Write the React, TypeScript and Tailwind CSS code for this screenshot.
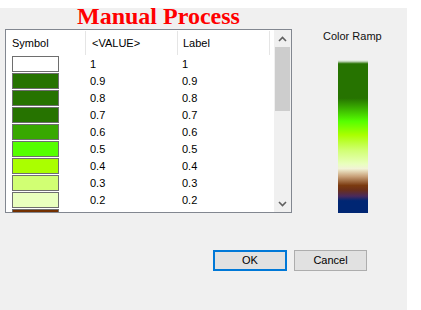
import React from 'react';

type Row = { value: string; color: string };

const rows: Row[] = [
  { value: '1', color: '#ffffff' },
  { value: '0.9', color: '#267300' },
  { value: '0.8', color: '#267300' },
  { value: '0.7', color: '#267300' },
  { value: '0.6', color: '#38a800' },
  { value: '0.5', color: '#55ff00' },
  { value: '0.4', color: '#aaff00' },
  { value: '0.3', color: '#d1ff73' },
  { value: '0.2', color: '#e9ffbe' },
  { value: '', color: '#733000' },
];

const Chevron: React.FC<{ down?: boolean }> = ({ down }) => (
  <svg width="9" height="6" viewBox="0 0 9 6" className={down ? 'rotate-180' : ''}>
    <path d="M1 5 L4.5 1.5 L8 5" fill="none" stroke="#606060" strokeWidth="1.6" />
  </svg>
);

export default function App() {
  return (
    <div className="relative w-[421px] h-[310px] bg-white overflow-hidden font-['Liberation_Sans',Arial,sans-serif] text-[11px] text-black">
      <div className="h-[8px]" />
      <div className="w-[407px] h-[302px] bg-[#f0f0f0] pl-[5px] pt-[21px]">
        <div className="flex">
          {/* table */}
          <div className="w-[287px] h-[184px] border border-[#828790] bg-white flex">
            <div className="w-[268px] flex flex-col">
              <div className="h-[25px] flex shrink-0 pt-[1px]">
                <div className="w-[80px] border-r border-[#e5e5e5] pl-[6px] flex items-center">Symbol</div>
                <div className="w-[92px] border-r border-[#e5e5e5] pl-[6px] flex items-center">&lt;VALUE&gt;</div>
                <div className="w-[92px] border-r border-[#e5e5e5] pl-[5px] flex items-center">Label</div>
              </div>
              <div className="flex-1 overflow-hidden">
                {rows.map((r, i) => (
                  <div key={i} className="h-[17px] flex items-start">
                    <div className="w-[84px] pl-[6px] pt-[1px]">
                      <div className="w-[47px] h-[16px] border border-[#6e6e6e]" style={{ backgroundColor: r.color }} />
                    </div>
                    <div className="w-[92px] leading-[17px] pt-[1px]">{r.value}</div>
                    <div className="leading-[17px] pt-[1px]">{r.value}</div>
                  </div>
                ))}
              </div>
            </div>
            <div className="w-[17px] bg-[#f0f0f0] flex flex-col items-center">
              <div className="h-[17px] flex items-center justify-center">
                <Chevron />
              </div>
              <div className="w-[15px] h-[64px] bg-[#cdcdcd]" />
              <div className="flex-1" />
              <div className="h-[17px] flex items-center justify-center">
                <Chevron down />
              </div>
            </div>
          </div>

          {/* color ramp */}
          <div className="ml-[31px] flex flex-col">
            <div className="leading-[14px] text-[#111]">Color Ramp</div>
            <div className="ml-[15px] mt-[17px] w-[30px] h-[153px] bg-[linear-gradient(to_bottom,#f4fbf2_0%,#b9cfb0_1%,#267300_2.5%,#267300_25%,#55ff00_40%,#aaff00_49%,#d1ff73_59%,#e9ffbe_68%,#f2f3d6_71%,#c9a27a_76%,#7a3a10_82%,#6a2f1a_85%,#4a2a5c_89%,#002673_92%,#002673_100%)]" />
          </div>
        </div>

        <div className="flex gap-[7px] ml-[208px] mt-[37px]">
          <button className="w-[74px] h-[21px] bg-[#e1e1e1] border-2 border-[#0078d7] leading-none">OK</button>
          <button className="w-[73px] h-[21px] bg-[#e1e1e1] border border-[#adadad] leading-none">Cancel</button>
        </div>
      </div>

      <div className="absolute left-[77px] top-[4px] font-['Liberation_Serif','Times_New_Roman',serif] font-bold text-[24px] leading-[24px] text-[#ff0000]">
        Manual Process
      </div>
    </div>
  );
}
